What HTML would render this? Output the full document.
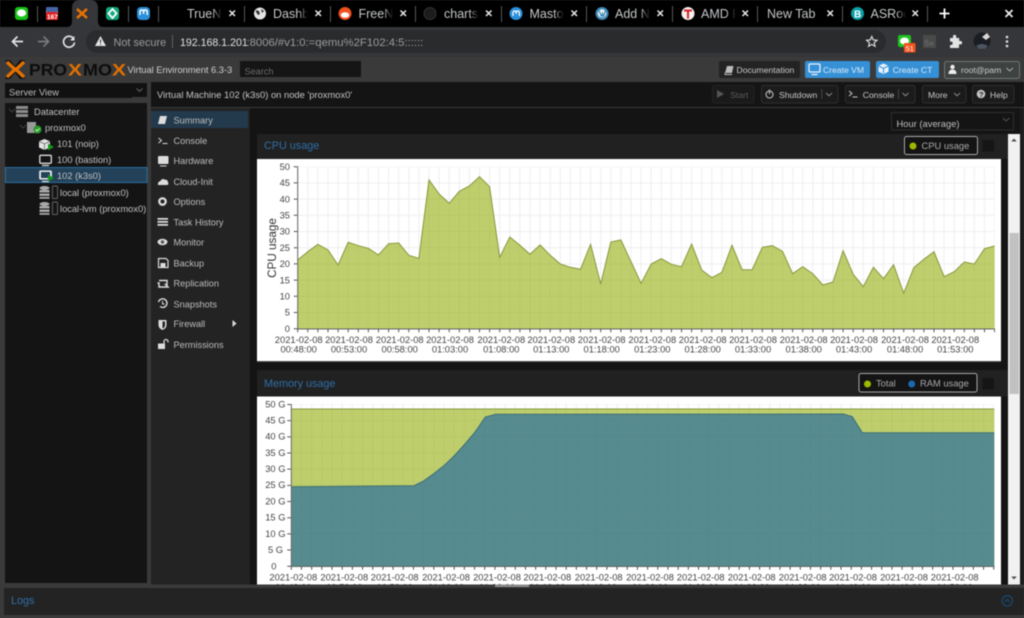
<!DOCTYPE html>
<html><head><meta charset="utf-8"><title>Proxmox</title>
<style>
html,body{margin:0;padding:0;background:#3a3a3a;width:1024px;height:618px;overflow:hidden}
svg{display:block;filter:blur(.4px)}
text{font-family:"Liberation Sans",sans-serif;white-space:pre}
.tab{fill:#c4c6c8;font-size:12.5px}
.m{fill:#bdbdbd;font-size:9.2px}
.mi{fill:#dcdcdc}
.tr{fill:#c0c0c0;font-size:9.3px}
.b{fill:#c8c8c8;font-size:8.6px}
.ax{fill:#444;font-size:9.35px}
.cx{stroke:#e8eaed;stroke-width:1.5;fill:none}
.sp{fill:#55575a}
</style></head><body>
<svg width="1024" height="618" viewBox="0 0 1024 618" xmlns="http://www.w3.org/2000/svg">
<defs>
<linearGradient id="fade"><stop offset="0" stop-color="#000" stop-opacity="0"/><stop offset="1" stop-color="#000"/></linearGradient>
<pattern id="g1" patternUnits="userSpaceOnUse" x="292.7" y="161.7" width="10.1" height="16.2"><path d="M5 0V16.2M0 5H10.1" stroke="#eeeeee" stroke-width="1" fill="none"/></pattern>
<pattern id="g2" patternUnits="userSpaceOnUse" x="286.3" y="399.3" width="10.18" height="16.17"><path d="M5 0V16.17M0 5H10.18" stroke="#eeeeee" stroke-width="1" fill="none"/></pattern>
</defs>

<!-- browser tab strip -->
<rect width="1024" height="27" fill="#000"/>
<path d="M67 27q5 0 5-6V8q0-8 8-8h10q8 0 8 8v13q0 6 5 6z" fill="#35363a"/>
<rect y="27" width="1024" height="30" fill="#35363a"/>
<rect x="86" y="30" width="800" height="23" rx="11.5" fill="#2a2b2d"/>

<!-- tab separators -->
<g class="sp"><rect x="37" y="6" width="1" height="16"/><rect x="128" y="6" width="1" height="16"/><rect x="158" y="6" width="1" height="16"/><rect x="244" y="6" width="1" height="16"/><rect x="330" y="6" width="1" height="16"/><rect x="415" y="6" width="1" height="16"/><rect x="501" y="6" width="1" height="16"/><rect x="586" y="6" width="1" height="16"/><rect x="672" y="6" width="1" height="16"/><rect x="757" y="6" width="1" height="16"/><rect x="842" y="6" width="1" height="16"/><rect x="927" y="6" width="1" height="16"/></g>

<!-- favicons -->
<rect x="15" y="7" width="13" height="13" rx="3" fill="#18c318"/><ellipse cx="21.5" cy="13" rx="4.6" ry="3.6" fill="#fff"/>
<rect x="46" y="7" width="12" height="13" rx="2" fill="#e8e8ee"/><rect x="46" y="7" width="12" height="5" rx="1.5" fill="#4467a8"/><rect x="46" y="12" width="12" height="8" rx="1" fill="#e02020"/><text x="47" y="19" font-size="6.5" font-weight="bold" fill="#fff">167</text>
<path d="M77 9l5 4.5 5-4.5M77 18l5-4.5 5 4.5" stroke="#e57000" stroke-width="2.6" fill="none"/>
<rect x="106" y="7" width="13" height="13" rx="3" fill="#10a87c"/><path d="M112.5 9l4 4.5-4 4.5-4-4.5z" fill="none" stroke="#fff" stroke-width="1.8"/>
<rect x="137" y="7" width="13" height="13" rx="4" fill="#2b90d9"/><path d="M140 15v-3q0-2 1.8-2t1.8 2v2m0-2q0-2 1.8-2t1.8 2v3" fill="none" stroke="#fff" stroke-width="1.4"/>
<circle cx="260" cy="13.5" r="6" fill="#e4e4e4"/><path d="M256 10l3 1 1 3-2 1-2-3zM261 9l3 2-2 2z" fill="#333"/>
<circle cx="345" cy="13.5" r="6.5" fill="#f0501e"/><ellipse cx="345" cy="15" rx="4.2" ry="2.8" fill="#fff"/>
<circle cx="430" cy="13.5" r="6" fill="#1c1c1c" stroke="#333"/><circle cx="516" cy="13.5" r="6.5" fill="#2b90d9"/><path d="M513 16v-3q0-2 1.6-2t1.6 2v1m0-1q0-2 1.6-2t1.6 2v3" fill="none" stroke="#fff" stroke-width="1.2"/>
<circle cx="602" cy="13.5" r="6.5" fill="#3d88b5"/><circle cx="602" cy="13.5" r="4.3" fill="#e8f2f6"/><path d="M599 10.5l2.5 6 1-3 1 3 2-6" stroke="#3d88b5" fill="none" stroke-width="1.2"/>
<circle cx="688" cy="13.5" r="6.5" fill="#f4f0ee"/><path d="M684 9.5h8v2h-3v7h-2v-7h-3z" fill="#d8222a"/>
<circle cx="857.5" cy="13.5" r="6.5" fill="#0aa0a8"/><text x="854" y="17.5" font-size="10" font-weight="bold" fill="#fff">B</text>

<!-- tab titles -->
<text class="tab" x="187" y="18">TrueN</text><rect x="212" y="3" width="10" height="20" fill="url(#fade)"/><rect x="222" y="3" width="5" height="20" fill="#000"/>
<text class="tab" x="273" y="18">Dashb</text><rect x="298" y="3" width="10" height="20" fill="url(#fade)"/><rect x="308" y="3" width="5" height="20" fill="#000"/>
<text class="tab" x="358.5" y="18">FreeN</text><rect x="383" y="3" width="10" height="20" fill="url(#fade)"/><rect x="393" y="3" width="5" height="20" fill="#000"/>
<text class="tab" x="444" y="18">charts</text><rect x="469" y="3" width="10" height="20" fill="url(#fade)"/><rect x="479" y="3" width="4" height="20" fill="#000"/>
<text class="tab" x="529.5" y="18">Masto</text><rect x="554" y="3" width="10" height="20" fill="url(#fade)"/><rect x="564" y="3" width="5" height="20" fill="#000"/>
<text class="tab" x="615" y="18">Add N</text><rect x="640" y="3" width="10" height="20" fill="url(#fade)"/><rect x="650" y="3" width="5" height="20" fill="#000"/>
<text class="tab" x="701" y="18">AMD F</text><rect x="726" y="3" width="10" height="20" fill="url(#fade)"/><rect x="736" y="3" width="4" height="20" fill="#000"/>
<text class="tab" x="767" y="18">New Tab</text>
<text class="tab" x="870.5" y="18">ASRoc</text><rect x="896" y="3" width="10" height="20" fill="url(#fade)"/><rect x="906" y="3" width="4" height="20" fill="#000"/>

<!-- tab close icons -->
<path class="cx" d="M229.5 10.5l5.5 5.500m0-5.500l-5.500 5.500M315.500 10.500l5.500 5.500m0-5.500l-5.500 5.500M400.500 10.500l5.500 5.500m0-5.500l-5.500 5.500M486 10.500l5.500 5.500m0-5.500l-5.500 5.500M571.500 10.500l5.500 5.500m0-5.500l-5.500 5.500M657.500 10.500l5.500 5.500m0-5.500l-5.500 5.500M742.500 10.500l5.500 5.500m0-5.500l-5.500 5.500M827.500 10.500l5.500 5.500m0-5.500l-5.500 5.500M912.500 10.500l5.500 5.500m0-5.500l-5.500 5.500"/>
<path d="M944.500 8.500v10M939.500 13.500h10" stroke="#fff" stroke-width="1.8" fill="none"/>
<path d="M1005.500 10l7 7m0-7l-7 7" stroke="#e8eaed" stroke-width="1.8" fill="none"/>

<!-- nav -->
<path d="M23 41.500H12.500M17.500 36.500l-5 5 5 5" stroke="#e0e2e4" stroke-width="1.7" fill="none"/>
<path d="M38 41.500h10.500M43.500 36.500l5 5-5 5" stroke="#77797b" stroke-width="1.7" fill="none"/>
<path d="M73.500 38.500a5.500 5.500 0 1 0 1 4" stroke="#dfe1e3" stroke-width="1.7" fill="none"/><path d="M74.500 36v4.500h-4.500z" fill="#dfe1e3"/>
<path d="M100.500 36l5.500 10h-11z" fill="#e3e3e3"/><rect x="100" y="39.500" width="1" height="3.500" fill="#333"/><rect x="100" y="44" width="1" height="1" fill="#333"/>
<text x="113.500" y="46" font-size="10.900" fill="#9a9b9d">Not secure</text>
<rect x="172" y="35" width="1" height="13" fill="#5f6164"/>
<text x="180" y="46" font-size="10.600" fill="#e0e0e0">192.168.1.201</text>
<text x="246.500" y="46" font-size="11.300" fill="#9a9b9d">:8006/#v1:0:=qemu%2F102:4:5::::::</text>
<path d="M871.800 36.500l1.500 3.400 3.700.4-2.800 2.400.8 3.600-3.200-1.900-3.200 1.900.8-3.600-2.800-2.400 3.700-.4z" fill="none" stroke="#d8d8d8" stroke-width="1.200"/>
<rect x="898" y="35" width="13" height="12" rx="2" fill="#1fc41f"/><ellipse cx="904.500" cy="41" rx="4.500" ry="3.500" fill="#fff"/>
<rect x="904" y="43" width="11.500" height="9.500" rx="1" fill="#f4511e"/><text x="905.500" y="51" font-size="7.500" fill="#fff">51</text>
<rect x="923" y="35" width="13" height="13" fill="#4a4a4a"/><text x="924" y="46" font-size="8" font-weight="bold" fill="#666">Se</text>
<path d="M950 38h3v-1.500a1.600 1.600 0 0 1 3.200 0V38h3v3h1.200a1.700 1.700 0 0 1 0 3.400H959V48h-9v-3h1a1.700 1.700 0 0 0 0-3.400h-1z" fill="#e3e3e3"/>
<circle cx="982" cy="41" r="8.500" fill="#1a1d22"/><path d="M982 37l5-4 3 4-4 3z" fill="#d8d8d8"/><path d="M976 46q6-4 12 0l-3 3h-6z" fill="#4c5560"/>
<g fill="#e3e3e3"><circle cx="1007" cy="37" r="1.300"/><circle cx="1007" cy="41.500" r="1.300"/><circle cx="1007" cy="46" r="1.300"/></g>

<!-- proxmox app bg -->
<rect y="57" width="1024" height="561" fill="#3a3a3a"/>
<path d="M5 60h5l15 19h-5zM25 60h-5L5 79h5z" fill="#111"/>
<path d="M7 62l8 7.500-8 7.500M24 62l-8 7.500 8 7.500" stroke="#e57000" stroke-width="3.300" fill="none"/>
<g font-weight="bold" font-size="16.500">
<text x="29" y="75.500" fill="#0c0c0c" textLength="38" lengthAdjust="spacingAndGlyphs">PRO</text>
<text x="68" y="75.500" fill="#e57000" textLength="14" lengthAdjust="spacingAndGlyphs">X</text>
<text x="83" y="75.500" fill="#0c0c0c" textLength="29" lengthAdjust="spacingAndGlyphs">MO</text>
<text x="112" y="75.500" fill="#e57000" textLength="14" lengthAdjust="spacingAndGlyphs">X</text>
</g>
<text x="127.500" y="73" font-size="9.300" fill="#cfcfcf">Virtual Environment 6.3-3</text>
<rect x="240" y="61" width="121" height="16" fill="#151515"/><text x="244.500" y="74.500" font-size="9.150" fill="#6c6c6c">Search</text>

<!-- top buttons -->
<rect x="719" y="61" width="81" height="17" rx="2" fill="#232323"/>
<path d="M725 73l2-7h6.500l-1.500 7z" fill="#bbb"/><path d="M725 73v1.500h7" stroke="#bbb" fill="none"/>
<text class="b" x="736.500" y="73">Documentation</text>
<rect x="805" y="61" width="65" height="17" rx="2" fill="#3590d6"/>
<rect x="809" y="64" width="11" height="8" rx="1" fill="none" stroke="#e8f2fa" stroke-width="1.300"/><path d="M811.500 74.500h6" stroke="#e8f2fa" stroke-width="1.300"/>
<text x="823" y="73" font-size="8.600" fill="#dcebf7">Create VM</text>
<rect x="876" y="61" width="63" height="17" rx="2" fill="#3590d6"/>
<path d="M883.500 63.500l5 2.200v6l-5 2.300-5-2.300v-6z" fill="#e8f2fa"/><path d="M878.500 66l5 2.300 5-2.300M883.500 68.300v5" stroke="#3590d6" fill="none"/>
<text x="892.700" y="73" font-size="8.600" fill="#dcebf7">Create CT</text>
<rect x="944.500" y="61.500" width="75" height="17" rx="2" fill="#3e4342" stroke="#6e7775"/>
<circle cx="952.500" cy="67" r="2.200" fill="#eee"/><path d="M948.500 74q0-4.500 4-4.500t4 4.500z" fill="#eee"/>
<text class="b" x="961" y="73">root@pam</text>
<path d="M1006.500 68l3.200 3 3.200-3" stroke="#aaa" fill="none"/>

<!-- left -->
<rect x="5" y="83" width="142" height="15" fill="#111"/>
<rect x="132" y="97" width="15" height="1" fill="#3a3a3a"/>
<text x="9" y="95.500" font-size="9.300" fill="#bdbdbd">Server View</text>
<path d="M136.500 88.500l3 2.800 3-2.800" stroke="#666" fill="none"/>
<rect x="5" y="103" width="142" height="480" fill="#141414"/>

<!-- tree -->
<path d="M9 109l3 3 3-3M20 125l3 3 3-3" stroke="#3f3f3f" fill="none"/>
<g fill="#8c8c8c"><rect x="16" y="106" width="12" height="3"/><rect x="16" y="110" width="12" height="3"/><rect x="16" y="114" width="12" height="3"/></g>
<text class="tr" x="34" y="115">Datacenter</text>
<rect x="27" y="122" width="9" height="11" fill="#999"/><circle cx="37.500" cy="129.500" r="4" fill="#279a2a"/><path d="M35.500 129.500l1.500 1.500 2.500-2.500" stroke="#d0f0d0" fill="none"/>
<text class="tr" x="45" y="131">proxmox0</text>
<path d="M44.500 139l5.500 2.200v6.300l-5.500 2.500-5.500-2.500v-6.300z" fill="#e4e4e4"/><path d="M39 141.500l5.500 2.300 5.500-2.300M44.500 144v6" stroke="#555" fill="none" stroke-width=".7"/><path d="M48 143.500l6 3.500-6 3.500z" fill="#17941b"/>
<text class="tr" x="57" y="147">101 (noip)</text>
<rect x="39.800" y="155.300" width="11.500" height="8" rx="1" fill="none" stroke="#dcdcdc" stroke-width="1.300"/><path d="M42 165.500h7" stroke="#dcdcdc" stroke-width="1.300"/>
<text class="tr" x="57" y="163">100 (bastion)</text>
<rect x="5.500" y="167.500" width="141.500" height="15" fill="#234159" stroke="#2b6f9f"/>
<rect x="39.800" y="171" width="11.500" height="8" rx="1" fill="#e0e6ea" stroke="#e4e4e4" stroke-width="1.300"/><rect x="41" y="172" width="9" height="6" fill="#234159"/><path d="M42 181.500h7" stroke="#dcdcdc" stroke-width="1.300"/><path d="M48 174.500l6 3.500-6 3.500z" fill="#17941b"/>
<text class="tr" x="57" y="179">102 (k3s0)</text>
<g fill="#a8a8a8"><ellipse cx="44.500" cy="188" rx="5" ry="2"/><rect x="39.500" y="190" width="10" height="2.500"/><rect x="39.500" y="193.500" width="10" height="2.500"/><rect x="39.500" y="197" width="10" height="1.800"/></g>
<rect x="52.500" y="186" width="5" height="12.500" rx="1" fill="none" stroke="#666" stroke-width=".9"/>
<text class="tr" x="60" y="196">local (proxmox0)</text>
<g fill="#a8a8a8"><ellipse cx="44.500" cy="204" rx="5" ry="2"/><rect x="39.500" y="206" width="10" height="2.500"/><rect x="39.500" y="209.500" width="10" height="2.500"/><rect x="39.500" y="213" width="10" height="1.800"/></g>
<rect x="52.500" y="202" width="5" height="12.500" rx="1" fill="none" stroke="#666" stroke-width=".9"/>
<text class="tr" x="60" y="212">local-lvm (proxmox0)</text>

<!-- header rows -->
<rect x="151" y="82" width="873" height="25" fill="#141414"/>
<rect x="151" y="107" width="873" height="1" fill="#3a3a3a"/>
<rect x="250" y="108" width="774" height="477" fill="#141414"/>
<text x="157" y="98" font-size="9.380" fill="#c4c4c4">Virtual Machine 102 (k3s0) on node 'proxmox0'</text>

<rect x="712.500" y="85.500" width="41.500" height="17.500" rx="2" fill="#1a1a1a" stroke="#232323"/>
<path d="M717 90l7 4-7 4z" fill="#555"/><text x="730.300" y="98" font-size="8.500" fill="#5c5c5c">Start</text>
<rect x="761.500" y="85.500" width="76.500" height="17.500" rx="2" fill="#1b1b1b" stroke="#2e2e2e"/>
<circle cx="769.500" cy="94.500" r="3.500" fill="none" stroke="#bbb" stroke-width="1.100"/><path d="M769.500 89.500v4.500" stroke="#bbb" stroke-width="1.200"/>
<text class="b" x="779" y="98">Shutdown</text><rect x="821.300" y="89" width="1" height="10" fill="#444"/><path d="M826 93l3 2.800 3-2.800" stroke="#888" fill="none"/>
<rect x="845.500" y="85.500" width="69.500" height="17.500" rx="2" fill="#1b1b1b" stroke="#2e2e2e"/>
<path d="M849 91l3 2.500-3 2.500M852.500 97h5" stroke="#c8c8c8" fill="none"/>
<text class="b" x="862.700" y="98">Console</text><rect x="898" y="89" width="1" height="10" fill="#444"/><path d="M902.500 93l3 2.800 3-2.800" stroke="#888" fill="none"/>
<rect x="922.500" y="85.500" width="43.500" height="17.500" rx="2" fill="#1b1b1b" stroke="#2e2e2e"/>
<text class="b" x="928" y="98">More</text><path d="M954 93l3 2.800 3-2.800" stroke="#888" fill="none"/>
<rect x="972.500" y="85.500" width="41.500" height="17.500" rx="2" fill="#1b1b1b" stroke="#2e2e2e"/>
<circle cx="981" cy="94" r="4.300" fill="#c4c4c4"/><text x="979" y="97" font-size="7.500" font-weight="bold" fill="#1b1b1b">?</text>
<text class="b" x="990" y="98">Help</text>

<rect x="891.500" y="112.500" width="122" height="17.500" fill="#141414" stroke="#2e2e2e"/>
<text x="896.500" y="127" font-size="9.400" fill="#c0c0c0">Hour (average)</text>
<path d="M1003 118l3.200 3 3.200-3" stroke="#555" fill="none"/>

<!-- side menu -->
<rect x="151" y="108" width="99" height="477" fill="#232323"/>
<rect x="250" y="108" width="1" height="477" fill="#111"/>
<rect x="151" y="111" width="97" height="17" fill="#233a4c"/>
<text class="m" x="173.500" y="123.300">Summary</text>
<text class="m" x="173.500" y="144">Console</text>
<text class="m" x="173.500" y="164">Hardware</text>
<text class="m" x="173.500" y="185">Cloud-Init</text>
<text class="m" x="173.500" y="205">Options</text>
<text class="m" x="173.500" y="225.300">Task History</text>
<text class="m" x="173.500" y="245.300">Monitor</text>
<text class="m" x="173.500" y="266.300">Backup</text>
<text class="m" x="173.500" y="286.300">Replication</text>
<text class="m" x="173.500" y="307.300">Snapshots</text>
<text class="m" x="173.500" y="327">Firewall</text>
<text class="m" x="173.500" y="348">Permissions</text>
<path d="M158 124l2-8h7l-2 8z" class="mi"/>
<path d="M158.500 138l3 2.500-3 2.500M162.500 143.500h5" stroke="#dcdcdc" fill="none"/>
<rect x="158" y="156" width="10.500" height="8" rx="1" class="mi"/><path d="M160 166h6.500" stroke="#dcdcdc"/>
<path d="M158 185q-.5-3.500 2.500-4 1.500-3 4-1.500 3.500 0 3.500 3 1 1.500-.5 2.500z" class="mi"/>
<circle cx="162.500" cy="201.500" r="3.200" fill="none" stroke="#dcdcdc" stroke-width="2.300"/>
<path d="M157.500 218h10.500v1.800h-10.500zM157.500 221h10.500v1.800h-10.500zM157.500 224h10.500v1.800h-10.500z" class="mi"/>
<ellipse cx="162.500" cy="242" rx="5" ry="3.200" class="mi"/><circle cx="162.500" cy="242" r="1.700" fill="#555"/>
<path d="M158.500 258.500h7.500l2 2v7h-9.500z" fill="none" stroke="#dcdcdc" stroke-width="1.200"/><rect x="160.500" y="263" width="5" height="4" class="mi"/>
<path d="M159 280.500h8v4h-1.500l2.500 2.500h-9v-4h-1.500" fill="none" stroke="#dcdcdc" stroke-width="1.400"/>
<path d="M158.500 302a4.300 4.300 0 1 1 1.500 4.500" fill="none" stroke="#dcdcdc" stroke-width="1.400"/><path d="M162.500 301v3h2" stroke="#dcdcdc" fill="none"/>
<path d="M158.500 320h8v5q0 3.500-4 5-4-1.500-4-5z" class="mi"/><path d="M162.500 321.500v7q2.500-1 2.500-3.500v-3.500z" fill="#232323"/>
<path d="M232.500 320l4 3.500-4 3.500z" class="mi"/>
<rect x="158" y="343.500" width="7" height="5.500" class="mi"/><path d="M164 343.500v-2a2 2 0 0 1 4 0v1" fill="none" stroke="#dcdcdc" stroke-width="1.200"/>

<!-- CPU panel -->
<rect x="257" y="134" width="751" height="25" fill="#212121"/>
<text x="264" y="149" font-size="10.800" fill="#2f6fa8">CPU usage</text>
<rect x="904.500" y="136.500" width="73" height="18" rx="2" fill="#141414" stroke="#a8a8a8"/>
<circle cx="913" cy="146" r="3.500" fill="#a0b800"/>
<text x="921.500" y="149" font-size="9.350" fill="#aaa">CPU usage</text>
<rect x="982.500" y="140" width="11.500" height="11.500" fill="#151515"/>
<rect x="257" y="159" width="744" height="202" fill="#fff"/>
<rect x="257" y="361" width="744" height="1" fill="#555"/>
<rect x="297.700" y="166.700" width="697" height="162" fill="url(#g1)"/>
<polygon points="297.700,328.700 297.700,260 307.800,251.700 317.900,244.300 328,250 338.100,265 348.200,242.300 358.300,245.700 368.400,248.300 378.500,255 388.600,243.700 398.700,243 408.800,255.300 418.900,258.300 429,180 439.100,194 449.200,203.300 459.300,191.300 469.400,186 479.500,176.700 489.600,186.700 499.700,257.300 509.800,237 519.900,245.300 530,254.300 540.100,245 550.200,255.300 560.300,264 570.400,267.300 580.500,269.300 590.600,244.300 600.700,284 610.800,242 620.900,240 631,261.700 641.100,283.300 651.200,264 661.300,258.700 671.400,264.300 681.500,266.700 691.600,244 701.700,270 711.800,277.700 721.900,272.300 732,245.300 742.100,269.700 752.200,269.700 762.300,247.300 772.400,245.700 782.500,251.300 792.600,273.700 802.700,266.700 812.800,273.700 822.900,285 833,282 843.100,250.700 853.200,274.300 863.300,286.700 873.400,267.300 883.500,278.700 893.600,264.700 903.700,293.300 913.800,267.700 923.900,259.300 934,251.700 944.100,276.700 954.200,271.700 964.300,262 974.400,264 984.500,248.700 994.600,246 994.600,328.700" fill="#94ae0a" fill-opacity=".6"/>
<polyline points="297.700,260 307.800,251.700 317.900,244.300 328,250 338.100,265 348.200,242.300 358.300,245.700 368.400,248.300 378.500,255 388.600,243.700 398.700,243 408.800,255.300 418.900,258.300 429,180 439.100,194 449.200,203.300 459.300,191.300 469.400,186 479.500,176.700 489.600,186.700 499.700,257.300 509.800,237 519.900,245.300 530,254.300 540.100,245 550.200,255.300 560.300,264 570.400,267.300 580.500,269.300 590.600,244.300 600.700,284 610.800,242 620.900,240 631,261.700 641.100,283.300 651.200,264 661.300,258.700 671.400,264.300 681.500,266.700 691.600,244 701.700,270 711.800,277.700 721.900,272.300 732,245.300 742.100,269.700 752.200,269.700 762.300,247.300 772.400,245.700 782.500,251.300 792.600,273.700 802.700,266.700 812.800,273.700 822.900,285 833,282 843.100,250.700 853.200,274.300 863.300,286.700 873.400,267.300 883.500,278.700 893.600,264.700 903.700,293.300 913.800,267.700 923.900,259.300 934,251.700 944.100,276.700 954.200,271.700 964.300,262 974.400,264 984.500,248.700 994.600,246" fill="none" stroke="#84993f" stroke-width="1"/>
<path d="M297.700 166.200V329H995" fill="none" stroke="#666" stroke-width="1"/>
<line x1="297.200" y1="330.500" x2="995" y2="330.500" stroke="#555" stroke-width="3.500" stroke-dasharray="1 9.100"/>
<line x1="295.500" y1="166.200" x2="295.500" y2="329.500" stroke="#555" stroke-width="3.500" stroke-dasharray="1 15.200"/>
<g class="ax" text-anchor="end">
<text x="290" y="170">50</text><text x="290" y="186">45</text><text x="290" y="202.300">40</text><text x="290" y="218.500">35</text><text x="290" y="234.700">30</text><text x="290" y="251">25</text><text x="290" y="267">20</text><text x="290" y="283.300">15</text><text x="290" y="299.500">10</text><text x="290" y="315.700">5</text><text x="290" y="332">0</text>
</g>
<text transform="translate(276,248) rotate(-90)" text-anchor="middle" font-size="11.700" fill="#333">CPU usage</text>
<g class="ax" text-anchor="middle">
<text x="298.700" y="343">2021-02-08</text><text x="349" y="343">2021-02-08</text><text x="399.700" y="343">2021-02-08</text><text x="450" y="343">2021-02-08</text><text x="501.300" y="343">2021-02-08</text><text x="551.300" y="343">2021-02-08</text><text x="601.700" y="343">2021-02-08</text><text x="652.300" y="343">2021-02-08</text><text x="702.700" y="343">2021-02-08</text><text x="753" y="343">2021-02-08</text><text x="803.700" y="343">2021-02-08</text><text x="854" y="343">2021-02-08</text><text x="905" y="343">2021-02-08</text><text x="955.300" y="343">2021-02-08</text>
<text x="298.700" y="352.700">00:48:00</text><text x="349" y="352.700">00:53:00</text><text x="399.700" y="352.700">00:58:00</text><text x="450" y="352.700">01:03:00</text><text x="501.300" y="352.700">01:08:00</text><text x="551.300" y="352.700">01:13:00</text><text x="601.700" y="352.700">01:18:00</text><text x="652.300" y="352.700">01:23:00</text><text x="702.700" y="352.700">01:28:00</text><text x="753" y="352.700">01:33:00</text><text x="803.700" y="352.700">01:38:00</text><text x="854" y="352.700">01:43:00</text><text x="905" y="352.700">01:48:00</text><text x="955.300" y="352.700">01:53:00</text>
</g>

<!-- memory panel -->
<rect x="257" y="370" width="751" height="26.500" fill="#212121"/>
<text x="264" y="387" font-size="10.800" fill="#2f6fa8">Memory usage</text>
<rect x="859" y="373.500" width="118" height="18.500" rx="2" fill="#141414" stroke="#a8a8a8"/>
<circle cx="867.500" cy="384" r="3.500" fill="#a0b800"/><text x="876" y="386.500" font-size="9.350" fill="#aaa">Total</text>
<circle cx="911.700" cy="384" r="3.500" fill="#1c68b0"/><text x="920" y="386.500" font-size="9.350" fill="#aaa">RAM usage</text>
<rect x="982.500" y="378" width="11.500" height="11.500" fill="#151515"/>
<rect x="257" y="396.500" width="744" height="190" fill="#fff"/>
<rect x="291.300" y="404.300" width="703" height="162" fill="url(#g2)"/>
<polygon points="291.300,409 994.300,409 994.300,566 291.300,566" fill="#94ae0a" fill-opacity=".6"/>
<polygon points="291.300,486.700 414,485.700 424,480.700 434.300,473.300 444.700,465 455,455 465,444 475.300,431.700 485.300,417 495.700,414.300 843.300,414 852.300,416.700 862.300,432.700 994.300,432.700 994.300,566 291.300,566" fill="#115fa6" fill-opacity=".6"/>
<path d="M291.300 409H994.300" stroke="#84993f" fill="none"/>
<polyline points="291.300,486.700 414,485.700 424,480.700 434.300,473.300 444.700,465 455,455 465,444 475.300,431.700 485.300,417 495.700,414.300 843.300,414 852.300,416.700 862.300,432.700 994.300,432.700" fill="none" stroke="#3f6f78"/>
<path d="M291.300 404V566.500H994.500" fill="none" stroke="#666"/>
<line x1="290.800" y1="568" x2="995" y2="568" stroke="#555" stroke-width="3.500" stroke-dasharray="1 9.180"/>
<line x1="289" y1="404" x2="289" y2="567" stroke="#555" stroke-width="3.500" stroke-dasharray="1 15.170"/>
<g class="ax" text-anchor="end">
<text x="285.500" y="407.500">50 G</text><text x="285.500" y="423.700">45 G</text><text x="285.500" y="439.700">40 G</text><text x="285.500" y="456">35 G</text><text x="285.500" y="472">30 G</text><text x="285.500" y="488.200">25 G</text><text x="285.500" y="504.500">20 G</text><text x="285.500" y="520.700">15 G</text><text x="285.500" y="537">10 G</text><text x="283" y="553">5 G</text><text x="276.500" y="569.500">0</text>
</g>
<g class="ax" text-anchor="middle">
<text x="293.300" y="580.700">2021-02-08</text><text x="344.300" y="580.700">2021-02-08</text><text x="394.700" y="580.700">2021-02-08</text><text x="446" y="580.700">2021-02-08</text><text x="497" y="580.700">2021-02-08</text><text x="547.300" y="580.700">2021-02-08</text><text x="598.700" y="580.700">2021-02-08</text><text x="650" y="580.700">2021-02-08</text><text x="700.700" y="580.700">2021-02-08</text><text x="751.700" y="580.700">2021-02-08</text><text x="802.700" y="580.700">2021-02-08</text><text x="853" y="580.700">2021-02-08</text><text x="904" y="580.700">2021-02-08</text><text x="954.700" y="580.700">2021-02-08</text>
<text x="293.300" y="590.400">00:48:00</text><text x="344.300" y="590.400">00:53:00</text><text x="394.700" y="590.400">00:58:00</text><text x="446" y="590.400">01:03:00</text><text x="497" y="590.400">01:08:00</text><text x="547.300" y="590.400">01:13:00</text><text x="598.700" y="590.400">01:18:00</text><text x="650" y="590.400">01:23:00</text><text x="700.700" y="590.400">01:28:00</text><text x="751.700" y="590.400">01:33:00</text><text x="802.700" y="590.400">01:38:00</text><text x="853" y="590.400">01:43:00</text><text x="904" y="590.400">01:48:00</text><text x="954.700" y="590.400">01:53:00</text>
</g>

<!-- scrollbar -->
<rect x="1008" y="134" width="12" height="451" fill="#f1f1f1"/>
<rect x="1009.500" y="233" width="9.500" height="161" fill="#c1c1c1"/>
<path d="M1014 138.500l2.800 3h-5.600z" fill="#505050"/><path d="M1014 579.500l2.800-3h-5.600z" fill="#505050"/>
<rect x="1020" y="108" width="4" height="477" fill="#1c1c1c"/>

<!-- logs -->
<rect x="0" y="584.500" width="1024" height="33.500" fill="#3a3a3a"/>
<rect x="495" y="584.500" width="34" height="2.500" fill="#8c8c8c"/>
<rect x="4" y="588" width="1020" height="27" fill="#232323"/>
<text x="11" y="604" font-size="10.800" fill="#2f6fa8">Logs</text>
<circle cx="1007.300" cy="600.800" r="5.200" fill="none" stroke="#164a73" stroke-width="1.200"/><path d="M1004.800 602l2.500-2.500 2.500 2.500" stroke="#164a73" fill="none" stroke-width="1.200"/>
</svg>
</body></html>
